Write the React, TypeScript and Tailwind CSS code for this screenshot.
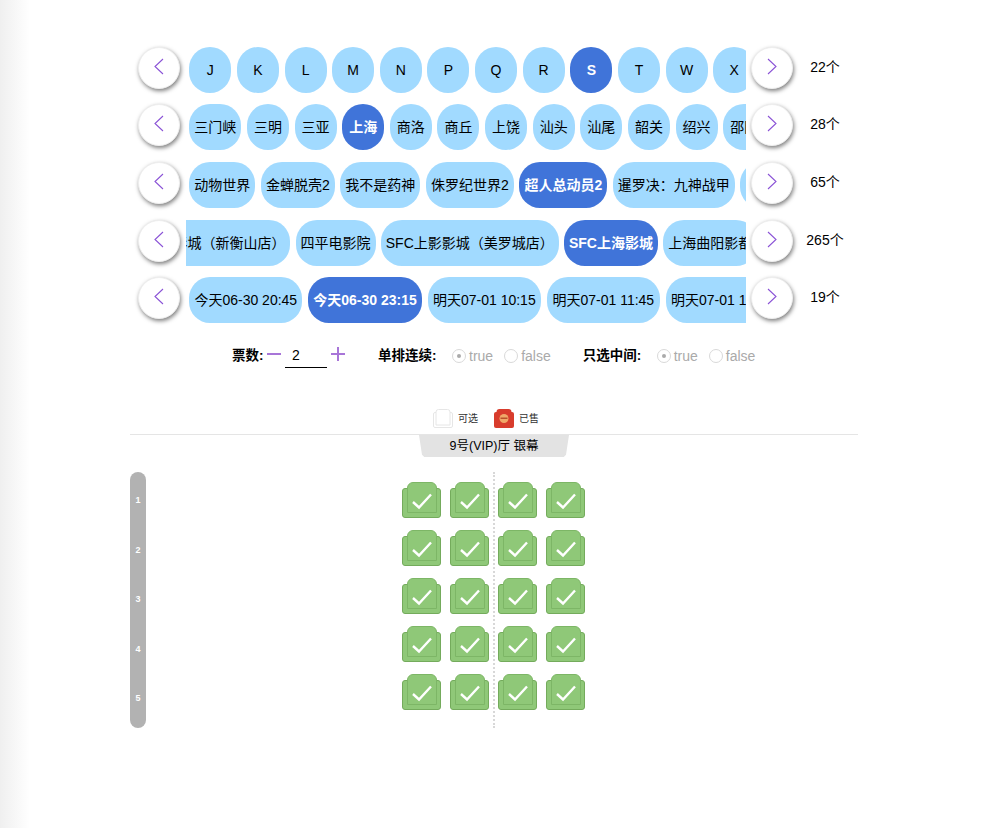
const FONT = "[font-family:'Liberation_Sans','Noto_Sans_CJK_SC',sans-serif]";

function Chevron({ dir }: { dir: 'left' | 'right' }) {
  return (
    <svg width="10" height="17" viewBox="0 0 10 17" fill="none" className="-mt-[3px]">
      <polyline
        points={dir === 'left' ? '9,1 1,8.5 9,16' : '1,1 9,8.5 1,16'}
        stroke="#8a52d6"
        strokeWidth="1.1"
      />
    </svg>
  );
}

function RoundBtn({ dir }: { dir: 'left' | 'right' }) {
  return (
    <div className="w-[42px] h-[42px] shrink-0 rounded-full bg-white border border-[#eeeeee] shadow-[1px_2px_4px_rgba(0,0,0,0.5)] flex items-center justify-center">
      <Chevron dir={dir} />
    </div>
  );
}

type Row = { items: string[]; active: string; count: string; top: string; track: string; pill: string };

const rows: Row[] = [
  { top: 'mt-0', track: 'gap-[5.64px] ml-[3.3px]', pill: 'min-w-[42px]', items: ['J', 'K', 'L', 'M', 'N', 'P', 'Q', 'R', 'S', 'T', 'W', 'X'], active: 'S', count: '22个' },
  { top: 'mt-[11px]', track: 'gap-[5.64px] ml-[3.3px]', pill: 'min-w-[42px]', items: ['三门峡', '三明', '三亚', '上海', '商洛', '商丘', '上饶', '汕头', '汕尾', '韶关', '绍兴', '邵阳'], active: '上海', count: '28个' },
  { top: 'mt-[12px]', track: 'gap-[5.64px] ml-[3.3px]', pill: 'min-w-[42px]', items: ['动物世界', '金蝉脱壳2', '我不是药神', '侏罗纪世界2', '超人总动员2', '暹罗决\uFF1A九神战甲', ''], active: '超人总动员2', count: '65个' },
  { top: 'mt-[12px]', track: 'gap-[5.2px] -ml-[73.6px]', pill: 'min-w-[42px]', items: ['SFC上影影城\uFF08新衡山店\uFF09', '四平电影院', 'SFC上影影城\uFF08美罗城店\uFF09', 'SFC上海影城', '上海曲阳影都'], active: 'SFC上海影城', count: '265个' },
  { top: 'mt-[11px]', track: 'gap-[6px] ml-[3.3px]', pill: 'min-w-[113px]', items: ['今天06-30 20:45', '今天06-30 23:15', '明天07-01 10:15', '明天07-01 11:45', '明天07-01 13:15'], active: '今天06-30 23:15', count: '19个' },
];

function Carousel({ row }: { row: Row }) {
  return (
    <div className={`flex items-start h-[46px] pl-[8px] ${row.top}`}>
      <RoundBtn dir="left" />
      <div className="ml-[6px] w-[560px] h-[46px] overflow-hidden shrink-0">
        <div className={`flex w-max ${row.track}`}>
          {row.items.map((t) => (
            <div
              key={t}
              className={`h-[46px] px-[5px] rounded-[21px] flex items-center justify-center whitespace-nowrap text-[14px] ${row.pill} ${
                t === row.active ? 'bg-[#4074d9] text-white font-bold' : 'bg-[#a1daff] text-black'
              }`}
            >
              {t}
            </div>
          ))}
        </div>
      </div>
      <div className="ml-[5px]">
        <RoundBtn dir="right" />
      </div>
      <div className="w-[64px] h-[40px] flex items-center justify-center text-[14px] text-black">{row.count}</div>
    </div>
  );
}

function Radio({ label, checked }: { label: string; checked?: boolean }) {
  return (
    <div className="flex items-center gap-[3px] text-[14px] text-[#aaaaaa]">
      <span className="w-[14px] h-[14px] rounded-full border border-[#d9d9d9] flex items-center justify-center">
        {checked && <span className="w-[4px] h-[4px] rounded-full bg-[#aaaaaa]" />}
      </span>
      {label}
    </div>
  );
}

function Seat() {
  return (
    <svg width="40" height="36" viewBox="0 0 40 36" className="block">
      <rect x="0.5" y="6.5" width="38" height="29" rx="2.5" fill="#8fc878" stroke="#74ab5c" />
      <path d="M5.5 6 a5.5 5.5 0 0 1 5.5 -5.5 h18 a5.5 5.5 0 0 1 5.5 5.5 V30.5 H5.5 Z" fill="#8fc878" />
      <path d="M5.5 30.5 V6 a5.5 5.5 0 0 1 5.5 -5.5 h18 a5.5 5.5 0 0 1 5.5 5.5 V30.5 Z" fill="none" stroke="#7db666" />
      <polyline points="11,20 17,25.5 29,12.5" fill="none" stroke="#ffffff" strokeWidth="2.4" />
    </svg>
  );
}

function SeatGroup() {
  return (
    <div className="grid grid-cols-2 content-start gap-x-[8px] gap-y-[12px] w-[88px] pt-[10px]">
      {Array.from({ length: 10 }).map((_, i) => (
        <Seat key={i} />
      ))}
    </div>
  );
}

export default function App() {
  return (
    <div className={`flex min-h-screen bg-white text-black ${FONT}`}>
      <div className="w-[30px] shrink-0 bg-gradient-to-r from-[#efefef] to-white" />
      <main className="ml-[100px] w-[728px] pt-[47px] pb-[100px]">
        <div className="flex flex-col">
          {rows.map((r) => (
            <Carousel key={r.count} row={r} />
          ))}
        </div>

        <div className="mt-[21px] h-[24px] flex items-center pl-[102px]">
          <span className="text-[13.5px] font-bold w-[35px]">票数:</span>
          <span className="w-[14px] h-[2px] -mt-[4px] bg-[#a875d8]" />
          <span className="ml-[4px] w-[42px] h-[24px] border-b border-black text-[14px] flex items-center pl-[7px]">2</span>
          <span className="ml-[4px] relative w-[14px] h-[14px] -mt-[4px]">
            <span className="absolute left-0 top-[6px] w-[14px] h-[2px] bg-[#a875d8]" />
            <span className="absolute left-[6px] top-0 w-[2px] h-[14px] bg-[#a875d8]" />
          </span>
          <span className="ml-[33px] text-[13.5px] font-bold w-[74px]">单排连续:</span>
          <Radio label="true" checked />
          <span className="ml-[11px]"><Radio label="false" /></span>
          <span className="ml-[32px] text-[13.5px] font-bold w-[74px]">只选中间:</span>
          <Radio label="true" checked />
          <span className="ml-[11px]"><Radio label="false" /></span>
        </div>

        <div className="mt-[41px] h-[19px] flex items-center pl-[303px]">
          <svg width="20" height="19" viewBox="0 0 20 19">
            <rect x="0.5" y="3.5" width="19" height="15" rx="1.5" fill="#ffffff" stroke="#e6e6e6" />
            <path d="M3 16 V3 a2.5 2.5 0 0 1 2.5 -2.5 h9 a2.5 2.5 0 0 1 2.5 2.5 V16 Z" fill="#ffffff" stroke="#e6e6e6" />
          </svg>
          <span className="ml-[5px] w-[36px] text-[10px] text-[#333333]">可选</span>
          <svg width="20" height="19" viewBox="0 0 20 19">
            <rect x="0" y="3" width="20" height="16" rx="2" fill="#d83c2c" />
            <path d="M2.5 16 V3 a3 3 0 0 1 3 -3 h9 a3 3 0 0 1 3 3 V16 Z" fill="#d83c2c" />
            <circle cx="10" cy="9.5" r="4.5" fill="#f0a868" />
            <rect x="6.5" y="8.5" width="7" height="1.5" fill="#b8502a" />
          </svg>
          <span className="ml-[5px] text-[10px] text-[#333333]">已售</span>
        </div>

        <div className="mt-[6px] border-t border-[#e5e5e5]" />
        <div className="mx-auto w-[150px] h-[22px] bg-[#e3e3e3] [clip-path:polygon(0_0,100%_0,98%_90%,96.5%_100%,3.5%_100%,2%_90%)] flex items-center justify-center text-[12.5px] text-black">
          9号(VIP)厅 银幕
        </div>

        <div className="mt-[15px] h-[256px] flex">
          <div className="w-[16px] h-full rounded-[8px] bg-[#b2b2b2] pt-[4px] flex flex-col text-white text-[9px] font-bold">
            {[1, 2, 3, 4, 5].map((n) => (
              <div key={n} className="h-[49.5px] flex items-center justify-center">{n}</div>
            ))}
          </div>
          <div className="ml-[256px] flex">
            <SeatGroup />
            <div className="ml-[3px] mr-[3px] h-full border-l-2 border-dotted border-[#d8d8d8]" />
            <SeatGroup />
          </div>
        </div>
      </main>
    </div>
  );
}
